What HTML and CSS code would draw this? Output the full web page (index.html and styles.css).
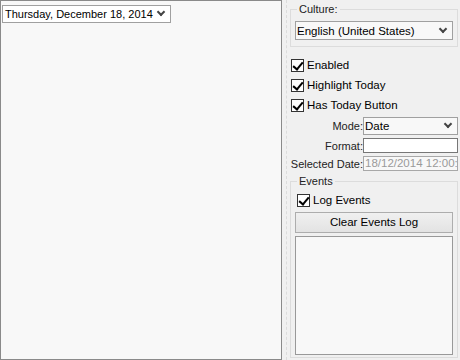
FILE: index.html
```html
<!DOCTYPE html>
<html lang="en">
<head>
    <meta charset="UTF-8">
    <title>DatePicker Demo</title>
    <link rel="stylesheet" href="styles.css">
</head>
<body>
    <div class="layout">
        <div class="stage">
            <div class="date-picker">
                <span class="date-text">Thursday, December 18, 2014</span>
                <span class="chev"></span>
            </div>
        </div>

        <div class="props">
            <fieldset class="group culture">
                <legend>Culture:</legend>
                <div class="combo wide">
                    <span>English (United States)</span>
                    <span class="chev"></span>
                </div>
            </fieldset>

            <div class="checks">
                <label class="check"><span class="box"></span>Enabled</label>
                <label class="check"><span class="box"></span>Highlight Today</label>
                <label class="check"><span class="box"></span>Has Today Button</label>
            </div>

            <div class="form">
                <span class="lbl">Mode:</span>
                <div class="combo small"><span>Date</span><span class="chev"></span></div>
                <span class="lbl">Format:</span>
                <div class="field"></div>
                <span class="lbl">Selected Date:</span>
                <div class="field disabled">18/12/2014 12:00:00</div>
            </div>

            <fieldset class="group events">
                <legend>Events</legend>
                <label class="check"><span class="box"></span>Log Events</label>
                <div class="btn">Clear Events Log</div>
                <div class="log"></div>
            </fieldset>
        </div>
    </div>
</body>
</html>
```

FILE: styles.css
```css
* {
    box-sizing: border-box;
}

body {
    margin: 0;
    font-family: "Liberation Sans", Arial, sans-serif;
    font-size: 11px;
    color: #000;
    background: #f0f0f0;
}

.layout {
    display: flex;
    width: 460px;
    height: 360px;
}

.stage {
    width: 282px;
    height: 360px;
    background: #f8f8f8;
    border: 1px solid #8a8a8a;
    padding: 4px 1px;
}

.date-picker {
    display: inline-flex;
    align-items: center;
    width: 169px;
    height: 18px;
    border: 1px solid #a0a0a0;
    background: #fff;
    padding: 0 3px 0 2px;
    justify-content: space-between;
}

.chev {
    width: 6px;
    height: 6px;
    border-right: 2px solid #444;
    border-bottom: 2px solid #444;
    transform: rotate(45deg);
    margin: -4px 3px 0 0;
}

.props {
    flex: 1;
    padding: 3px 2px 2px 3px;
    display: flex;
    flex-direction: column;
    border-left: 1px dashed #dcdcdc;
    margin-left: 4px;
}

.group {
    border: 1px solid #dcdcdc;
    margin: 0;
    padding: 0 4px 3px;
}

.group legend {
    padding: 0 2px;
    margin-left: 2px;
    color: #222;
}

.culture {
    padding-top: 6px;
    padding-bottom: 6px;
}

.combo {
    display: flex;
    align-items: center;
    justify-content: space-between;
    border: 1px solid #a0a0a0;
    background: #f8f8f8;
    height: 19px;
    padding: 0 3px 0 1px;
    font-size: 11.5px;
}

.checks {
    display: flex;
    flex-direction: column;
    gap: 6px;
    padding: 11px 0 4px 1px;
}

.check {
    display: flex;
    align-items: center;
    gap: 3px;
    height: 14px;
    font-size: 11.5px;
}

.box {
    position: relative;
    width: 13px;
    height: 13px;
    border: 1px solid #333;
    background: #fff;
}

.box::after {
    content: "";
    position: absolute;
    left: 3px;
    top: 0;
    width: 4px;
    height: 8px;
    border-right: 2px solid #000;
    border-bottom: 2px solid #000;
    transform: rotate(40deg);
}

.form {
    display: grid;
    grid-template-columns: 73px 95px;
    row-gap: 3px;
    align-items: center;
    margin-top: 1px;
    font-size: 11.5px;
}

.lbl {
    text-align: right;
    white-space: nowrap;
    font-size: 11px;
    color: #222;
}

.field {
    height: 15px;
    border: 1px solid #777;
    background: #fff;
    overflow: hidden;
    white-space: nowrap;
    line-height: 13px;
    padding-left: 1px;
}

.combo.small {
    height: 18px;
}

.field.disabled {
    color: #9a9a9a;
    border-color: #a8a8a8;
    background: #f8f8f8;
}

.events {
    flex: 1;
    margin-top: 4px;
    display: flex;
    flex-direction: column;
    padding-bottom: 2px;
}

.events .check {
    margin: 6px 0 5px 2px;
}

.btn {
    height: 21px;
    border: 1px solid #adadad;
    background: linear-gradient(#f0f0f0, #e3e3e3);
    text-align: center;
    line-height: 19px;
    font-size: 11.5px;
}

.log {
    flex: 1;
    margin-top: 3px;
    border: 1px solid #999;
    background: #f8f8f8;
}
```
